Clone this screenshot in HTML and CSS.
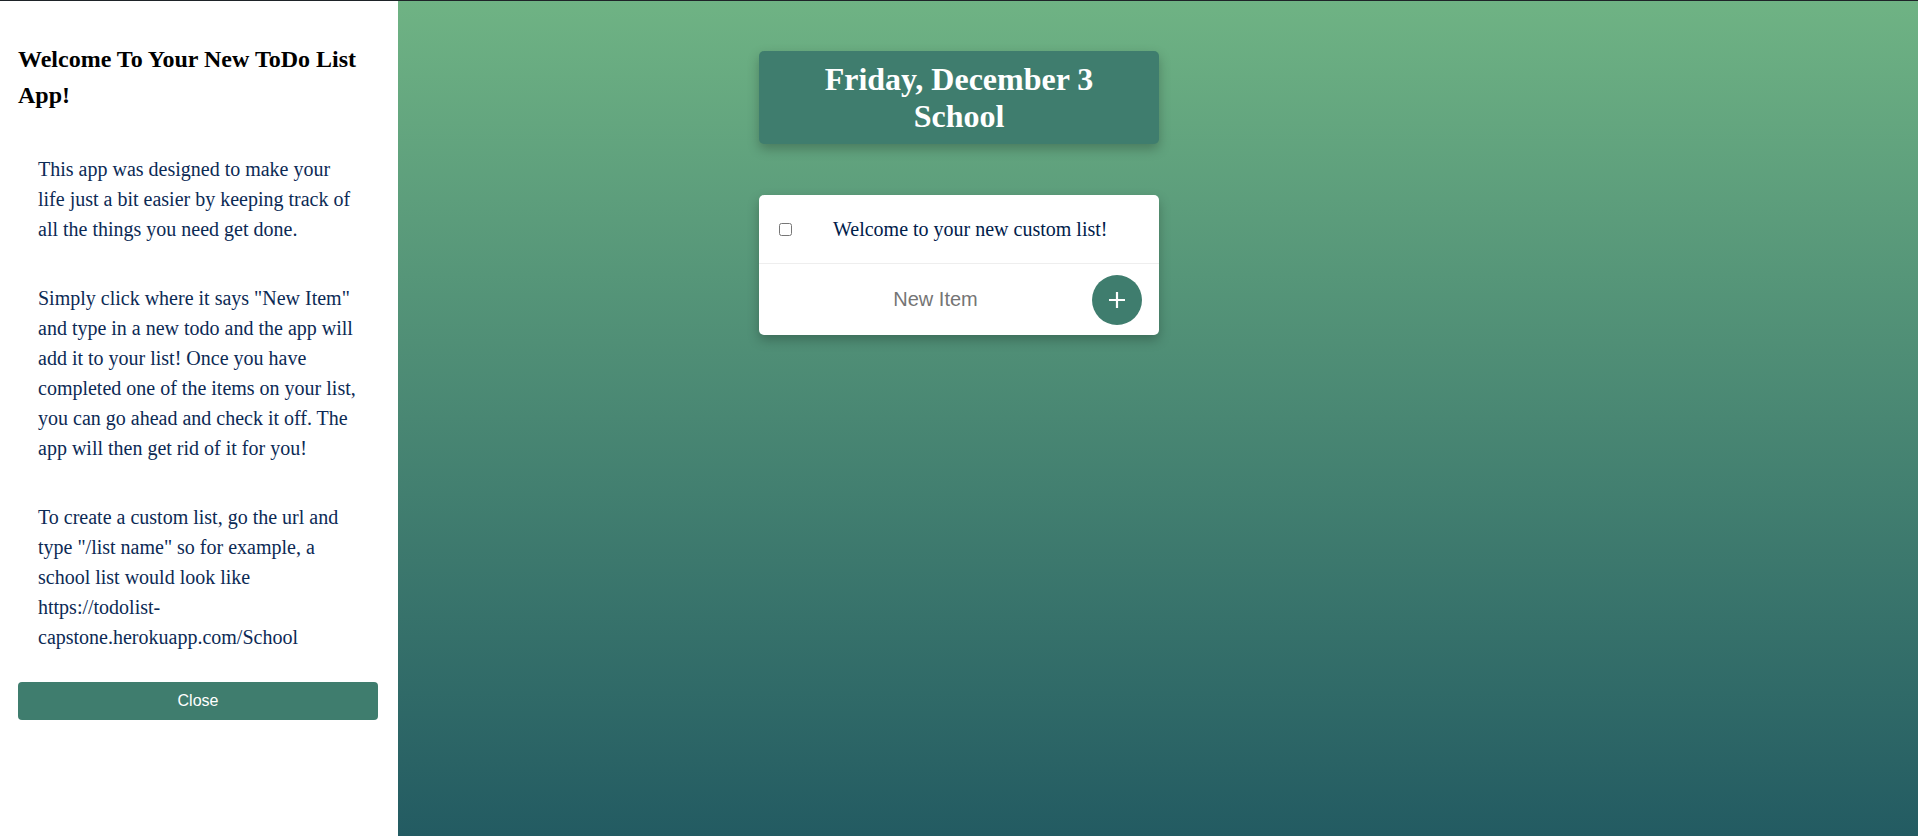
FILE: index.html
```html
<!DOCTYPE html>
<html lang="en">
<head>
<meta charset="utf-8">
<title>ToDo List</title>
<link rel="stylesheet" href="styles.css">
</head>
<body>
  <aside class="sidenav">
    <h2 class="sidenav-title">Welcome To Your New ToDo List App!</h2>
    <p class="sidenav-text">This app was designed to make your life just a bit easier by keeping track of all the things you need get done.</p>
    <p class="sidenav-text">Simply click where it says "New Item" and type in a new todo and the app will add it to your list! Once you have completed one of the items on your list, you can go ahead and check it off. The app will then get rid of it for you!</p>
    <p class="sidenav-text">To create a custom list, go the url and type "/list name" so for example, a school list would look like https://todolist-capstone.herokuapp.com/School</p>
    <button class="close-btn" type="button">Close</button>
  </aside>

  <main class="main">
    <div class="heading box">
      <h1 class="heading-title">Friday, December 3<br>School</h1>
    </div>

    <div class="list box">
      <form class="item">
        <input class="item-check" type="checkbox">
        <p class="item-text">Welcome to your new custom list!</p>
      </form>
      <form class="new-item">
        <input class="new-input" type="text" placeholder="New Item" autocomplete="off">
        <button class="add-btn" type="button" aria-label="Add">
          <svg width="18" height="18" viewBox="0 0 18 18"><path d="M9 1v16M1 9h16" stroke="#fff" stroke-width="2.2" fill="none"/></svg>
        </button>
      </form>
    </div>
  </main>
</body>
</html>
```

FILE: styles.css
```css
* { box-sizing: border-box; }

html, body { height: 100%; }

body {
  margin: 0;
  border-top: 1px solid #1e2328;
  min-height: 100vh;
  background: linear-gradient(to bottom, #6fb384 0%, #235b62 100%);
  font-family: "Liberation Serif", "Times New Roman", serif;
  overflow: hidden;
}

/* Side navigation overlay */
.sidenav {
  position: fixed;
  top: 1px;
  left: 0;
  bottom: 0;
  width: 398px;
  background: #ffffff;
  padding: 40px 20px 0 18px;
  display: flex;
  flex-direction: column;
}

.sidenav-title {
  margin: 0;
  font-size: 24px;
  line-height: 36px;
  font-weight: bold;
  color: #000;
}

.sidenav-text {
  margin: 41px 0 0 0;
  padding: 0 20px;
  width: 360px;
  font-size: 20px;
  line-height: 30px;
  color: #0c2a55;
}

.sidenav-text + .sidenav-text { margin-top: 39px; }

.close-btn {
  margin-top: 30px;
  width: 360px;
  height: 38px;
  border: none;
  border-radius: 4px;
  background: #3f7d6e;
  color: #fff;
  font-family: "Liberation Sans", Arial, sans-serif;
  font-size: 16px;
  cursor: pointer;
}

/* Main content */
.main {
  display: flex;
  flex-direction: column;
  align-items: center;
  padding-top: 50px;
}

.box {
  width: 400px;
  border-radius: 5px;
  box-shadow: 0 5px 12px rgba(0, 0, 0, 0.25);
}

.heading {
  background: #3f7d6e;
  padding: 10px 10px 9px;
  text-align: center;
}

.heading-title {
  margin: 0;
  font-size: 32px;
  font-weight: bold;
  color: #fff;
  line-height: normal;
}

.list {
  margin-top: 51px;
  background: #fff;
}

.item {
  display: flex;
  align-items: center;
  height: 69px;
  border-bottom: 1px solid #eeeeee;
  padding-left: 20px;
  margin: 0;
}

.item-check {
  margin: 0;
  width: 13px;
  height: 13px;
}

.item-text {
  margin: 0 0 0 41px;
  font-size: 20px;
  line-height: 30px;
  color: #00204a;
}

.new-item {
  display: flex;
  align-items: center;
  height: 71px;
  margin: 0;
  padding: 0 17px 0 20px;
}

.new-input {
  flex: 1;
  min-width: 0;
  border: none;
  outline: none;
  background: transparent;
  text-align: center;
  font-family: "Liberation Sans", Arial, sans-serif;
  font-size: 20px;
  height: 40px;
  padding: 0;
  color: #333;
}

.new-input::placeholder { color: #757575; }

.add-btn {
  width: 50px;
  height: 50px;
  border-radius: 50%;
  border: none;
  background: #3f7d6e;
  display: flex;
  align-items: center;
  justify-content: center;
  padding: 0;
  cursor: pointer;
}

.add-btn svg { display: block; }
```
